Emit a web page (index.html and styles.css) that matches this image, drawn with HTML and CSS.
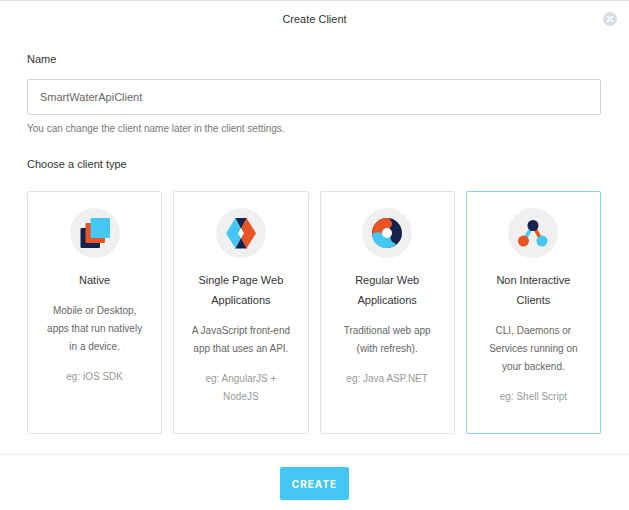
FILE: index.html
```html
<!DOCTYPE html>
<html lang="en">
<head>
    <meta charset="utf-8">
    <title>Create Client</title>
    <meta name="viewport" content="width=device-width, initial-scale=1">
    <link rel="stylesheet" href="styles.css">
</head>
<body>
    <form class="modal">
        <header class="modal-header">
            <h1 class="modal-title">Create Client</h1>
            <button type="button" class="close" aria-label="Close">
                <svg viewBox="0 0 14 14" width="14" height="14">
                    <circle cx="7" cy="7" r="7" fill="#d9dde1"/>
                    <path d="M4.5 4.5l5 5M9.5 4.5l-5 5" stroke="#fff" stroke-width="1.6" stroke-linecap="round"/>
                </svg>
            </button>
        </header>

        <div class="modal-body">
            <label class="field-label" for="client-name">Name</label>
            <input class="text-input" id="client-name" type="text" value="SmartWaterApiClient">
            <p class="help">You can change the client name later in the client settings.</p>

            <fieldset class="types">
                <legend class="field-label">Choose a client type</legend>
                <div class="cards">
                    <label class="card">
                        <input class="card-radio" type="radio" name="type" value="native">
                        <svg class="card-icon" viewBox="0 0 50 50">
                            <circle cx="25" cy="25" r="25" fill="#f0f0f0"/>
                            <rect x="10.5" y="20" width="19.5" height="20" rx="1" fill="#16214d"/>
                            <rect x="15.5" y="15" width="19.5" height="20" rx="1" fill="#eb5424"/>
                            <rect x="20.5" y="10" width="19.5" height="20" rx="1" fill="#44c7f4"/>
                        </svg>
                        <span class="card-title">Native</span>
                        <span class="card-text">Mobile or Desktop, apps that run natively in a device.</span>
                        <span class="card-example">eg: iOS SDK</span>
                    </label>
                    <label class="card">
                        <input class="card-radio" type="radio" name="type" value="spa">
                        <svg class="card-icon" viewBox="0 0 50 50">
                            <circle cx="25" cy="25" r="25" fill="#f0f0f0"/>
                            <path d="M19 10h12l-6 11zM19 40.500h12l-6-11z" fill="#16214d"/>
                            <path d="M19.500 10L10 25.250l9.500 15.250L25 30l-2.800-4.750L25 20.500z" fill="#44c7f4"/>
                            <path d="M30.500 10L40 25.250l-9.500 15.250L25 30l2.800-4.750L25 20.500z" fill="#eb5424"/>
                            <path d="M25 20.500l3 4.750-3 4.750-3-4.750z" fill="#fff"/>
                        </svg>
                        <span class="card-title">Single Page Web Applications</span>
                        <span class="card-text">A JavaScript front-end app that uses an API.</span>
                        <span class="card-example">eg: AngularJS + NodeJS</span>
                    </label>
                    <label class="card">
                        <input class="card-radio" type="radio" name="type" value="regular">
                        <svg class="card-icon" viewBox="0 0 50 50">
                            <circle cx="25" cy="25" r="25" fill="#f0f0f0"/>
                            <circle cx="25" cy="25" r="15" fill="#16214d"/>
                            <path d="M25 25L28 20Q31 16 29.500 14Q28.500 10.500 25 10A15 15 0 0 0 10 26L13 28z" fill="#eb5424"/>
                            <path d="M25 25L20 25Q12 23 10 27A15 15 0 0 0 34 37Q33 34.500 30.500 34Q27.500 31 29 27z" fill="#44c7f4"/>
                            <circle cx="25" cy="25" r="5" fill="#fff"/>
                        </svg>
                        <span class="card-title">Regular Web Applications</span>
                        <span class="card-text">Traditional web app (with refresh).</span>
                        <span class="card-example">eg: Java ASP.NET</span>
                    </label>
                    <label class="card">
                        <input class="card-radio" type="radio" name="type" value="non-interactive" checked>
                        <svg class="card-icon" viewBox="0 0 50 50">
                            <circle cx="25" cy="25" r="25" fill="#f0f0f0"/>
                            <path d="M25 17.500L15.500 33" stroke="#44c7f4" stroke-width="3.500"/>
                            <path d="M25 17.500L34 33" stroke="#eb5424" stroke-width="3.500"/>
                            <circle cx="25" cy="17.500" r="5.500" fill="#16214d"/>
                            <circle cx="15.500" cy="33" r="5.500" fill="#eb5424"/>
                            <circle cx="34" cy="33" r="5.500" fill="#44c7f4"/>
                        </svg>
                        <span class="card-title">Non Interactive Clients</span>
                        <span class="card-text">CLI, Daemons or Services running on your backend.</span>
                        <span class="card-example">eg: Shell Script</span>
                    </label>
                </div>
            </fieldset>
        </div>

        <footer class="modal-footer">
            <button type="submit" class="create">CREATE</button>
        </footer>
    </form>
</body>
</html>
```
FILE: styles.css
```css
* {
    box-sizing: border-box;
}
body {
    margin: 0;
    background-color: #fff;
    color: #333;
    font-family: "Liberation Sans", Arial, sans-serif;
    font-size: 11px;
    line-height: 20px;
}
.modal {
    border-top: 1px solid #e3e3e3;
}
.modal-header {
    display: grid;
    grid-template-columns: 1fr auto 1fr;
    align-items: center;
    padding: 8px 12px;
}
.modal-title {
    grid-column: 2;
    margin: 0;
    font-size: 11px;
    font-weight: 400;
}
.close {
    display: flex;
    justify-self: end;
    padding: 0;
    border: 0;
    background: none;
    cursor: pointer;
}
.modal-body {
    padding: 12px 28px 20px 27px;
}
.field-label {
    display: block;
    padding: 0;
    font-size: 11px;
}
.text-input {
    display: block;
    width: 100%;
    height: 36px;
    margin-top: 10px;
    padding: 0 12px;
    border: 1px solid #d0d2d3;
    border-radius: 2px;
    color: #666;
    font-family: inherit;
    font-size: 11px;
    outline: none;
}
.help {
    margin: 5px 0 16px;
    color: #777;
    font-size: 10px;
    line-height: 18px;
}
.types {
    min-width: 0;
    margin: 0;
    padding: 0;
    border: 0;
}
.cards {
    display: grid;
    grid-template-columns: repeat(4, 1fr);
    gap: 11px;
    margin-top: 17px;
}
.card {
    display: flex;
    flex-direction: column;
    align-items: center;
    gap: 12px;
    position: relative;
    padding: 16px 14px 27px;
    border: 1px solid #e3e3e3;
    border-radius: 2px;
    text-align: center;
    cursor: pointer;
}
.card:has(:checked) {
    border-color: #8ed3ee;
}
.card-radio {
    position: absolute;
    opacity: 0;
    margin: 0;
}
.card-icon {
    width: 50px;
    height: 50px;
}
.card-text,
.card-example {
    color: #666;
    font-size: 10px;
    line-height: 18px;
}
.card-example {
    color: #999;
}
.modal-footer {
    display: flex;
    justify-content: center;
    padding: 12px;
    border-top: 1px solid #e8e8e8;
}
.create {
    height: 33px;
    padding: 0 12px;
    border: 0;
    border-radius: 2px;
    background-color: #44c7f4;
    color: #fff;
    font-family: Inter, "Liberation Sans", sans-serif;
    font-size: 10px;
    font-weight: 700;
    letter-spacing: 1px;
    cursor: pointer;
}
```
